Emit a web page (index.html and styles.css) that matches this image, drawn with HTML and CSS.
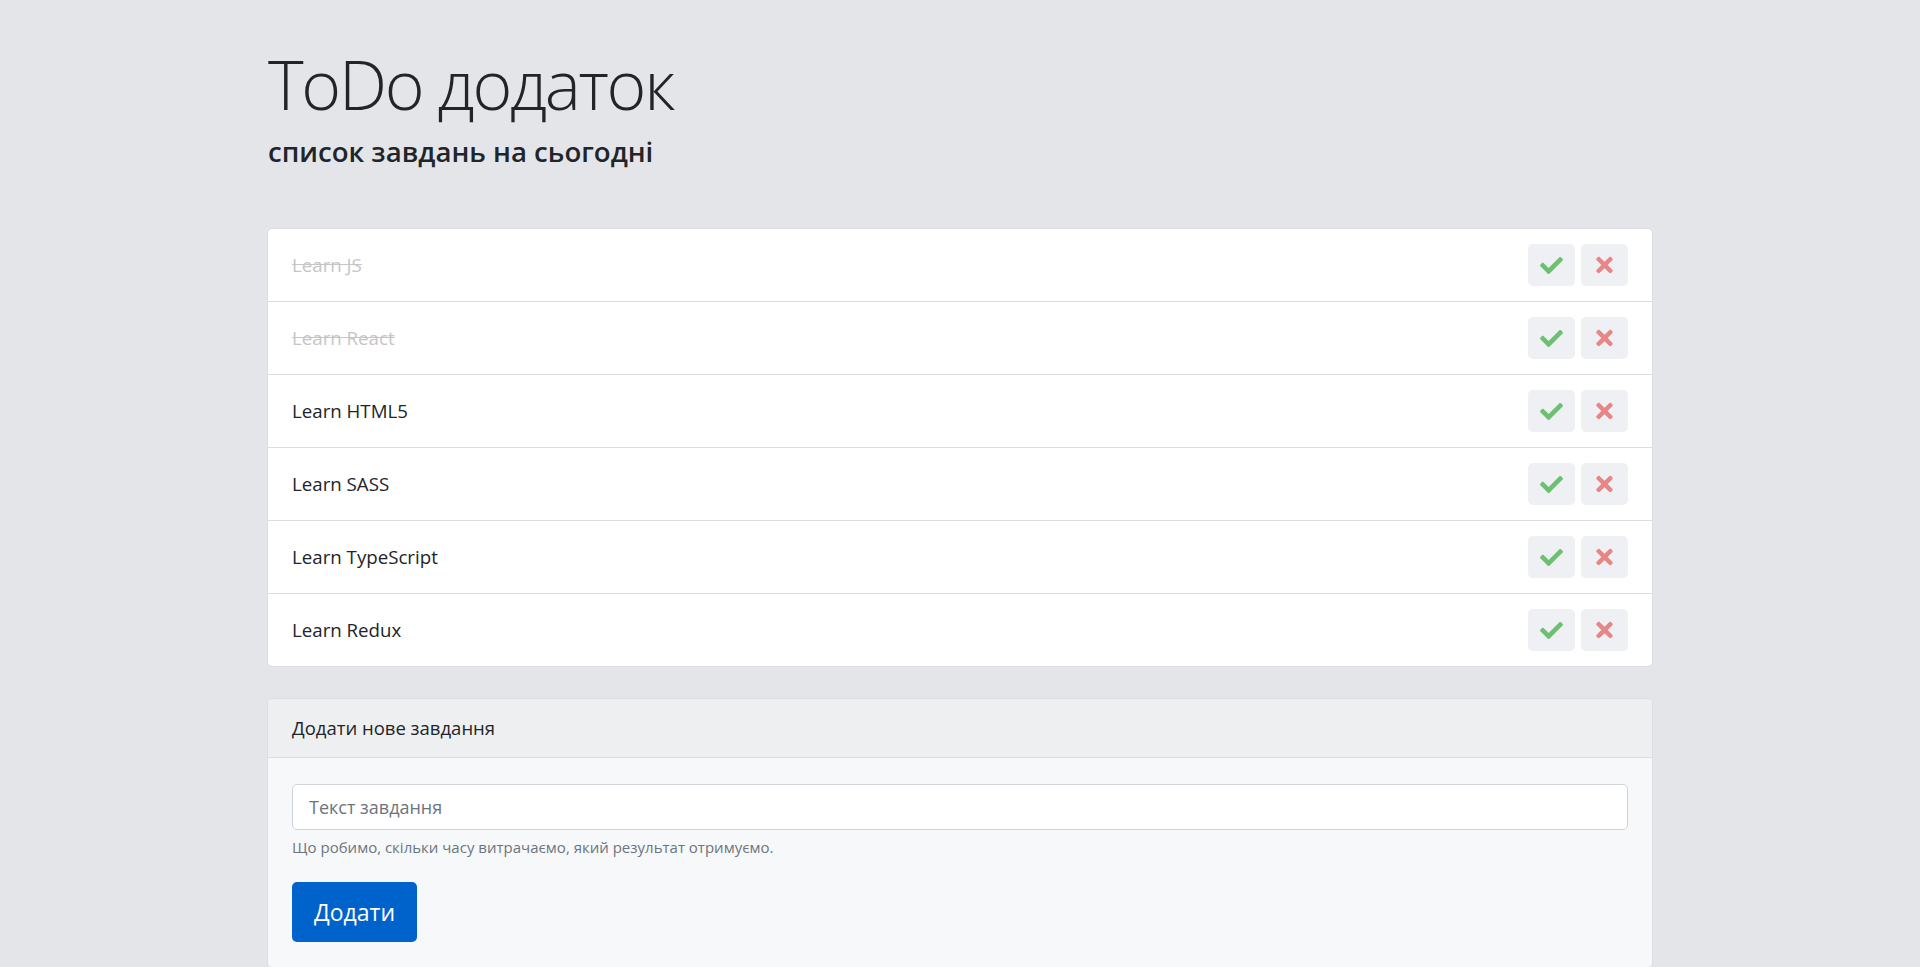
FILE: index.html
```html
<!DOCTYPE html>
<html lang="uk">
<head>
<meta charset="utf-8">
<title>ToDo додаток</title>
<link rel="stylesheet" href="styles.css">
</head>
<body>
<div class="container">
  <header class="page-header">
    <h1 class="title">ToDo додаток</h1>
    <h4 class="subtitle">список завдань на сьогодні</h4>
  </header>

  <ul class="todo-list">
    <li class="todo-item done">
      <span class="todo-text">Learn JS</span>
      <div class="actions">
        <button class="act-btn" type="button" aria-label="done"><svg class="ic-check" viewBox="0 0 512 512"><path d="M173.898 439.404l-166.4-166.4c-9.997-9.997-9.997-26.206 0-36.204l36.203-36.204c9.997-9.998 26.207-9.998 36.204 0L192 312.69 432.095 72.596c9.997-9.997 26.207-9.997 36.204 0l36.203 36.204c9.997 9.997 9.997 26.206 0 36.204l-294.4 294.401c-9.998 9.997-26.207 9.997-36.204-.001z"/></svg></button>
        <button class="act-btn" type="button" aria-label="delete"><svg class="ic-times" viewBox="0 0 352 512"><path d="M242.72 256l100.07-100.07c12.28-12.28 12.28-32.19 0-44.48l-22.24-22.24c-12.28-12.28-32.19-12.28-44.48 0L176 189.28 75.93 89.21c-12.28-12.28-32.19-12.28-44.48 0L9.21 111.45c-12.28 12.28-12.28 32.19 0 44.48L109.28 256 9.21 356.07c-12.28 12.28-12.28 32.19 0 44.48l22.24 22.24c12.28 12.28 32.2 12.28 44.48 0L176 322.72l100.07 100.07c12.28 12.28 32.2 12.28 44.48 0l22.24-22.24c12.28-12.28 12.28-32.19 0-44.48L242.72 256z"/></svg></button>
      </div>
    </li>
    <li class="todo-item done">
      <span class="todo-text">Learn React</span>
      <div class="actions">
        <button class="act-btn" type="button" aria-label="done"><svg class="ic-check" viewBox="0 0 512 512"><path d="M173.898 439.404l-166.4-166.4c-9.997-9.997-9.997-26.206 0-36.204l36.203-36.204c9.997-9.998 26.207-9.998 36.204 0L192 312.69 432.095 72.596c9.997-9.997 26.207-9.997 36.204 0l36.203 36.204c9.997 9.997 9.997 26.206 0 36.204l-294.4 294.401c-9.998 9.997-26.207 9.997-36.204-.001z"/></svg></button>
        <button class="act-btn" type="button" aria-label="delete"><svg class="ic-times" viewBox="0 0 352 512"><path d="M242.72 256l100.07-100.07c12.28-12.28 12.28-32.19 0-44.48l-22.24-22.24c-12.28-12.28-32.19-12.28-44.48 0L176 189.28 75.93 89.21c-12.28-12.28-32.19-12.28-44.48 0L9.21 111.45c-12.28 12.28-12.28 32.19 0 44.48L109.28 256 9.21 356.07c-12.28 12.28-12.28 32.19 0 44.48l22.24 22.24c12.28 12.28 32.2 12.28 44.48 0L176 322.72l100.07 100.07c12.28 12.28 32.2 12.28 44.48 0l22.24-22.24c12.28-12.28 12.28-32.19 0-44.48L242.72 256z"/></svg></button>
      </div>
    </li>
    <li class="todo-item">
      <span class="todo-text">Learn HTML5</span>
      <div class="actions">
        <button class="act-btn" type="button" aria-label="done"><svg class="ic-check" viewBox="0 0 512 512"><path d="M173.898 439.404l-166.4-166.4c-9.997-9.997-9.997-26.206 0-36.204l36.203-36.204c9.997-9.998 26.207-9.998 36.204 0L192 312.69 432.095 72.596c9.997-9.997 26.207-9.997 36.204 0l36.203 36.204c9.997 9.997 9.997 26.206 0 36.204l-294.4 294.401c-9.998 9.997-26.207 9.997-36.204-.001z"/></svg></button>
        <button class="act-btn" type="button" aria-label="delete"><svg class="ic-times" viewBox="0 0 352 512"><path d="M242.72 256l100.07-100.07c12.28-12.28 12.28-32.19 0-44.48l-22.24-22.24c-12.28-12.28-32.19-12.28-44.48 0L176 189.28 75.93 89.21c-12.28-12.28-32.19-12.28-44.48 0L9.21 111.45c-12.28 12.28-12.28 32.19 0 44.48L109.28 256 9.21 356.07c-12.28 12.28-12.28 32.19 0 44.48l22.24 22.24c12.28 12.28 32.2 12.28 44.48 0L176 322.72l100.07 100.07c12.28 12.28 32.2 12.28 44.48 0l22.24-22.24c12.28-12.28 12.28-32.19 0-44.48L242.72 256z"/></svg></button>
      </div>
    </li>
    <li class="todo-item">
      <span class="todo-text">Learn SASS</span>
      <div class="actions">
        <button class="act-btn" type="button" aria-label="done"><svg class="ic-check" viewBox="0 0 512 512"><path d="M173.898 439.404l-166.4-166.4c-9.997-9.997-9.997-26.206 0-36.204l36.203-36.204c9.997-9.998 26.207-9.998 36.204 0L192 312.69 432.095 72.596c9.997-9.997 26.207-9.997 36.204 0l36.203 36.204c9.997 9.997 9.997 26.206 0 36.204l-294.4 294.401c-9.998 9.997-26.207 9.997-36.204-.001z"/></svg></button>
        <button class="act-btn" type="button" aria-label="delete"><svg class="ic-times" viewBox="0 0 352 512"><path d="M242.72 256l100.07-100.07c12.28-12.28 12.28-32.19 0-44.48l-22.24-22.24c-12.28-12.28-32.19-12.28-44.48 0L176 189.28 75.93 89.21c-12.28-12.28-32.19-12.28-44.48 0L9.21 111.45c-12.28 12.28-12.28 32.19 0 44.48L109.28 256 9.21 356.07c-12.28 12.28-12.28 32.19 0 44.48l22.24 22.24c12.28 12.28 32.2 12.28 44.48 0L176 322.72l100.07 100.07c12.28 12.28 32.2 12.28 44.48 0l22.24-22.24c12.28-12.28 12.28-32.19 0-44.48L242.72 256z"/></svg></button>
      </div>
    </li>
    <li class="todo-item">
      <span class="todo-text">Learn TypeScript</span>
      <div class="actions">
        <button class="act-btn" type="button" aria-label="done"><svg class="ic-check" viewBox="0 0 512 512"><path d="M173.898 439.404l-166.4-166.4c-9.997-9.997-9.997-26.206 0-36.204l36.203-36.204c9.997-9.998 26.207-9.998 36.204 0L192 312.69 432.095 72.596c9.997-9.997 26.207-9.997 36.204 0l36.203 36.204c9.997 9.997 9.997 26.206 0 36.204l-294.4 294.401c-9.998 9.997-26.207 9.997-36.204-.001z"/></svg></button>
        <button class="act-btn" type="button" aria-label="delete"><svg class="ic-times" viewBox="0 0 352 512"><path d="M242.72 256l100.07-100.07c12.28-12.28 12.28-32.19 0-44.48l-22.24-22.24c-12.28-12.28-32.19-12.28-44.48 0L176 189.28 75.93 89.21c-12.28-12.28-32.19-12.28-44.48 0L9.21 111.45c-12.28 12.28-12.28 32.19 0 44.48L109.28 256 9.21 356.07c-12.28 12.28-12.28 32.19 0 44.48l22.24 22.24c12.28 12.28 32.2 12.28 44.48 0L176 322.72l100.07 100.07c12.28 12.28 32.2 12.28 44.48 0l22.24-22.24c12.28-12.28 12.28-32.19 0-44.48L242.72 256z"/></svg></button>
      </div>
    </li>
    <li class="todo-item">
      <span class="todo-text">Learn Redux</span>
      <div class="actions">
        <button class="act-btn" type="button" aria-label="done"><svg class="ic-check" viewBox="0 0 512 512"><path d="M173.898 439.404l-166.4-166.4c-9.997-9.997-9.997-26.206 0-36.204l36.203-36.204c9.997-9.998 26.207-9.998 36.204 0L192 312.69 432.095 72.596c9.997-9.997 26.207-9.997 36.204 0l36.203 36.204c9.997 9.997 9.997 26.206 0 36.204l-294.4 294.401c-9.998 9.997-26.207 9.997-36.204-.001z"/></svg></button>
        <button class="act-btn" type="button" aria-label="delete"><svg class="ic-times" viewBox="0 0 352 512"><path d="M242.72 256l100.07-100.07c12.28-12.28 12.28-32.19 0-44.48l-22.24-22.24c-12.28-12.28-32.19-12.28-44.48 0L176 189.28 75.93 89.21c-12.28-12.28-32.19-12.28-44.48 0L9.21 111.45c-12.28 12.28-12.28 32.19 0 44.48L109.28 256 9.21 356.07c-12.28 12.28-12.28 32.19 0 44.48l22.24 22.24c12.28 12.28 32.2 12.28 44.48 0L176 322.72l100.07 100.07c12.28 12.28 32.2 12.28 44.48 0l22.24-22.24c12.28-12.28 12.28-32.19 0-44.48L242.72 256z"/></svg></button>
      </div>
    </li>
  </ul>

  <section class="add-card">
    <div class="add-header">Додати нове завдання</div>
    <form class="add-body">
      <input class="task-input" type="text" placeholder="Текст завдання">
      <small class="help-text">Що робимо, скільки часу витрачаємо, який результат отримуємо.</small>
      <button class="add-btn" type="button">Додати</button>
    </form>
  </section>
</div>
</body>
</html>
```

FILE: styles.css
```css
* { box-sizing: border-box; }

html, body {
  margin: 0;
  padding: 0;
}

body {
  background: #e4e5e8;
  color: #212529;
  font-family: "Open Sans", "Noto Sans", "Liberation Sans", sans-serif;
  font-size: 18px;
  line-height: 1.5;
}

.container {
  width: 1386px;
  margin: 0 auto;
}

.page-header {
  padding-top: 41px;
  padding-bottom: 60px;
  padding-left: 1px;
}

.title {
  margin: 0;
  font-family: "Open Sans", "Noto Sans", sans-serif;
  font-size: 68px;
  font-weight: 300;
  line-height: 86px;
  letter-spacing: -2.3px;
  color: #212529;
}

.subtitle {
  margin: 7px 0 0;
  font-size: 27.6px;
  font-weight: 600;
  line-height: 34px;
  color: #212529;
}

.todo-list {
  list-style: none;
  margin: 0;
  padding: 0;
  background: #fff;
  border: 1px solid #dcdde0;
  border-radius: 5px;
}

.todo-item {
  display: flex;
  align-items: center;
  justify-content: space-between;
  padding: 15px 24px;
  border-top: 1px solid #dcdde0;
}

.todo-item:first-child {
  border-top: none;
}

.todo-text {
  font-size: 18.7px;
  color: #212529;
}

.todo-item.done .todo-text {
  color: #c6c6c6;
  text-decoration: line-through;
}

.actions {
  display: flex;
  gap: 6px;
}

.act-btn {
  display: flex;
  align-items: center;
  justify-content: center;
  width: 47px;
  height: 42px;
  padding: 0;
  border: none;
  border-radius: 5px;
  background: #eff0f3;
  cursor: pointer;
}

.ic-check {
  width: 23px;
  height: 23px;
  fill: #6cc070;
}

.ic-times {
  width: 17px;
  height: 24px;
  fill: #e88585;
}

.add-card {
  margin-top: 31px;
  border: 1px solid #dcdde0;
  border-radius: 5px;
  background: #f7f8fa;
  overflow: hidden;
}

.add-header {
  height: 59px;
  display: flex;
  align-items: center;
  padding: 0 24px;
  background: #eeeff1;
  border-bottom: 1px solid #dcdde0;
  font-size: 18.5px;
  color: #212529;
}

.add-body {
  display: flex;
  flex-direction: column;
  align-items: flex-start;
  padding: 26px 24px 25px;
  margin: 0;
}

.task-input {
  width: 100%;
  height: 46px;
  padding: 0 16px;
  border: 1px solid #ced4da;
  border-radius: 5px;
  background: #fff;
  font-family: inherit;
  font-size: 18px;
  color: #212529;
}

.task-input::placeholder {
  color: #6c757d;
}

.help-text {
  margin-top: 6px;
  font-size: 15px;
  line-height: 22px;
  color: #6c757d;
}

.add-btn {
  margin-top: 24px;
  height: 60px;
  padding: 0 22px;
  border: none;
  border-radius: 5px;
  background: #0063cc;
  color: #fff;
  font-family: inherit;
  font-size: 23px;
  cursor: pointer;
}
```
